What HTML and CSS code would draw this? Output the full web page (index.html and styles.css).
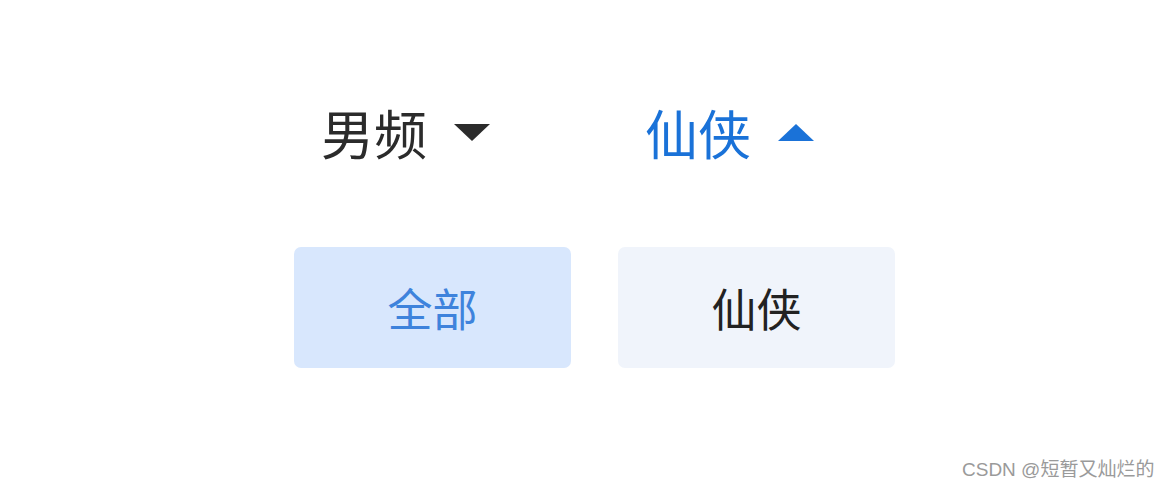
FILE: index.html
```html
<!DOCTYPE html>
<html lang="zh">
<head>
<meta charset="utf-8">
<title>筛选</title>
<link rel="stylesheet" href="styles.css">
</head>
<body>
<div class="page">
  <div class="grid">
    <div class="tab">
      <span class="tab-label">男频</span>
      <span class="tri tri-down"></span>
    </div>
    <div class="tab tab-active">
      <span class="tab-label">仙侠</span>
      <span class="tri tri-up"></span>
    </div>
    <div class="chip chip-active">全部</div>
    <div class="chip">仙侠</div>
  </div>
  <div class="watermark">CSDN @短暂又灿烂的</div>
</div>
</body>
</html>
```
FILE: styles.css
```css
html, body {
  margin: 0;
  padding: 0;
  background: #ffffff;
}
body {
  font-family: "Noto Sans CJK SC", "Noto Sans", sans-serif;
  width: 1168px;
  height: 491px;
  overflow: hidden;
}
.page {
  position: relative;
  height: 491px;
}
.grid {
  display: grid;
  grid-template-columns: 277px 277px;
  column-gap: 47px;
  row-gap: 80px;
  padding: 97px 0 0 294px;
}
.tab {
  display: flex;
  align-items: center;
  padding-left: 27px;
  height: 70px;
  color: #2b2b2b;
}
.tab-label {
  font-size: 53px;
  line-height: 70px;
}
.tab-active {
  color: #1a72d8;
}
.tri {
  width: 0;
  height: 0;
  margin-left: 27px;
  border-left: 18.5px solid transparent;
  border-right: 18.5px solid transparent;
}
.tri-down {
  border-top: 17px solid #2b2b2b;
}
.tri-up {
  border-bottom: 17px solid #1a72d8;
}
.chip {
  height: 121px;
  border-radius: 7px;
  background: #f0f4fb;
  color: #222222;
  font-size: 45px;
  display: flex;
  align-items: center;
  justify-content: center;
}
.chip-active {
  background: #d8e7fd;
  color: #3e83dc;
}
.watermark {
  position: absolute;
  left: 962px;
  top: 456px;
  font-family: "Liberation Sans", "Noto Sans CJK SC", sans-serif;
  font-size: 19px;
  line-height: 28px;
  color: #9a9a9a;
}
```
